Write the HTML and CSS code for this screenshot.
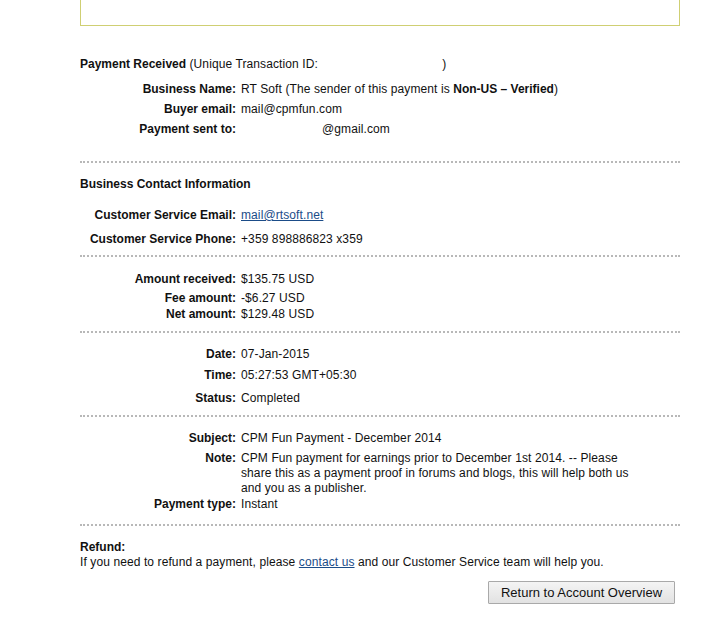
FILE: index.html
```html
<!DOCTYPE html>
<html>
<head>
<meta charset="utf-8">
<link rel="stylesheet" href="styles.css">
</head>
<body>
<div class="page">
  <div class="topbox"></div>

  <p class="heading"><b>Payment Received</b> (Unique Transaction ID: <span class="blank blank-id"></span>)</p>

  <div class="row m10"><span class="label">Business Name:</span><span class="value">RT Soft (The sender of this payment is <b>Non-US – Verified</b>)</span></div>
  <div class="row m5"><span class="label">Buyer email:</span><span class="value">mail@cpmfun.com</span></div>
  <div class="row m5"><span class="label">Payment sent to:</span><span class="value"><span class="blank blank-mail"></span>@gmail.com</span></div>

  <div class="sep m24"></div>

  <p class="heading m14"><b>Business Contact Information</b></p>
  <div class="row m16"><span class="label">Customer Service Email:</span><span class="value"><a href="#">mail@rtsoft.net</a></span></div>
  <div class="row m9"><span class="label">Customer Service Phone:</span><span class="value">+359 898886823 x359</span></div>

  <div class="sep m8"></div>

  <div class="row m15"><span class="label">Amount received:</span><span class="value">$135.75 USD</span></div>
  <div class="row m4"><span class="label">Fee amount:</span><span class="value">-$6.27 USD</span></div>
  <div class="row m1"><span class="label">Net amount:</span><span class="value">$129.48 USD</span></div>

  <div class="sep m9"></div>

  <div class="row m14"><span class="label">Date:</span><span class="value">07-Jan-2015</span></div>
  <div class="row m6"><span class="label">Time:</span><span class="value">05:27:53 GMT+05:30</span></div>
  <div class="row m8"><span class="label">Status:</span><span class="value">Completed</span></div>

  <div class="sep m9"></div>

  <div class="row m14"><span class="label">Subject:</span><span class="value">CPM Fun Payment - December 2014</span></div>
  <div class="row m5"><span class="label">Note:</span><span class="value note">CPM Fun payment for earnings prior to December 1st 2014. -- Please share this as a payment proof in forums and blogs, this will help both us and you as a publisher.</span></div>
  <div class="row m1"><span class="label">Payment type:</span><span class="value">Instant</span></div>

  <div class="sep m12"></div>

  <div class="refund m14">
    <b>Refund:</b><br>
    If you need to refund a payment, please <a href="#">contact us</a> and our Customer Service team will help you.
  </div>

  <div class="actions">
    <button class="btn" type="button">Return to Account Overview</button>
  </div>
</div>
</body>
</html>
```

FILE: styles.css
```css
html, body {
  margin: 0;
  padding: 0;
  background: #fff;
}
body {
  font-family: "Liberation Sans", Arial, sans-serif;
  font-size: 12px;
  line-height: 15px;
  letter-spacing: 0.1px;
  color: #111;
}
b {
  letter-spacing: 0;
}
.page {
  width: 600px;
  margin-left: 80px;
}
.topbox {
  box-sizing: border-box;
  height: 26px;
  border: 1px solid #cfcf73;
  border-top: none;
}
.heading {
  margin: 31px 0 0 0;
}
.heading.m14 { margin-top: 14px; }
.blank {
  display: inline-block;
  height: 10px;
  vertical-align: middle;
}
.blank-id { width: 121px; }
.blank-mail { width: 81px; }
.row {
  display: grid;
  grid-template-columns: 156px 1fr;
  column-gap: 5px;
}
.label {
  font-weight: bold;
  text-align: right;
  letter-spacing: 0;
}
.value.note {
  max-width: 400px;
}
.sep {
  height: 0;
  border-top: 2px dotted #b8b8b8;
}
.m1 { margin-top: 1px; }
.m4 { margin-top: 4px; }
.m5 { margin-top: 5px; }
.m6 { margin-top: 6px; }
.m8 { margin-top: 8px; }
.m9 { margin-top: 9px; }
.m10 { margin-top: 10px; }
.m12 { margin-top: 12px; }
.m14 { margin-top: 14px; }
.m15 { margin-top: 15px; }
.m16 { margin-top: 16px; }
.m24 { margin-top: 24px; }
a {
  color: #1b4c88;
  text-decoration: underline;
}
.actions {
  display: flex;
  justify-content: flex-end;
  padding-right: 5px;
  margin-top: 11px;
}
.btn {
  box-sizing: border-box;
  width: 187px;
  height: 23px;
  padding: 0;
  font-family: "Liberation Sans", Arial, sans-serif;
  font-size: 13px;
  letter-spacing: 0;
  color: #111;
  background: linear-gradient(#f4f4f4, #e2e2e2);
  border: 1px solid #a9a9a9;
  border-radius: 1px;
}
```
